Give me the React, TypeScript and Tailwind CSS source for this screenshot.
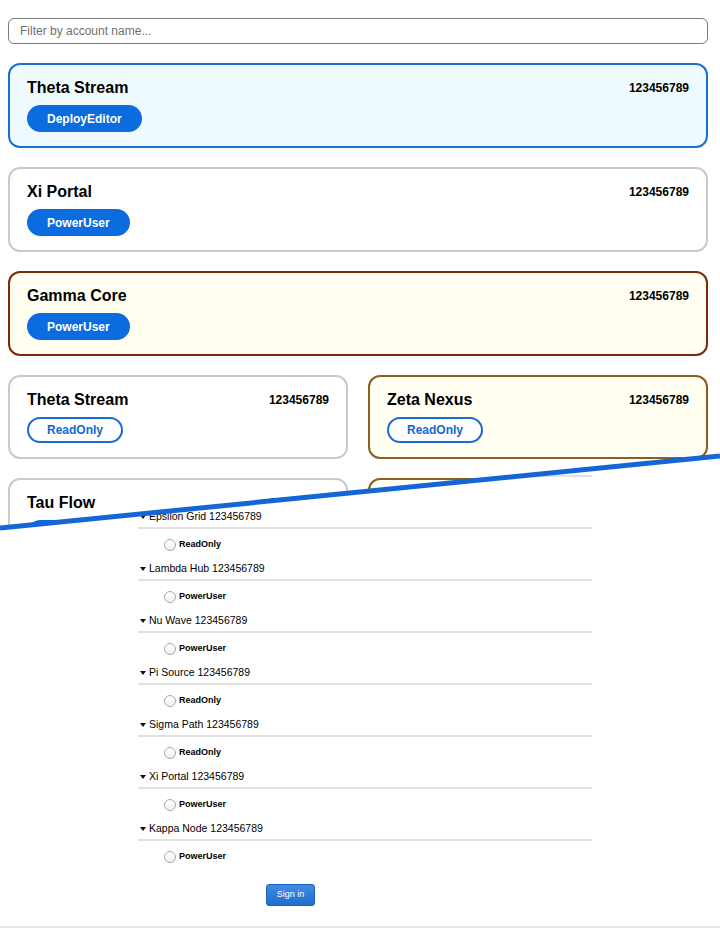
import React from "react";

type Tone = "blue" | "plain" | "amber" | "gold";
interface Account { name: string; id: string; role: string; tone: Tone; outline?: boolean; }

const FONT = { fontFamily: '"Liberation Sans", Arial, Helvetica, sans-serif' };

const TONES: Record<Tone, string> = {
  blue: "border-2 border-[#1a6fd6] bg-[#effaff]",
  plain: "border-2 border-[#cacaca] bg-white",
  amber: "border-2 border-[#7a2c08] bg-[#fffef0]",
  gold: "border-2 border-[#8c5f1c] bg-[#fffef0]",
};

const wide: Account[] = [
  { name: "Theta Stream", id: "123456789", role: "DeployEditor", tone: "blue" },
  { name: "Xi Portal", id: "123456789", role: "PowerUser", tone: "plain" },
  { name: "Gamma Core", id: "123456789", role: "PowerUser", tone: "amber" },
];

const pairs: Account[][] = [
  [
    { name: "Theta Stream", id: "123456789", role: "ReadOnly", tone: "plain", outline: true },
    { name: "Zeta Nexus", id: "123456789", role: "ReadOnly", tone: "gold", outline: true },
  ],
  [
    { name: "Tau Flow", id: "123456789", role: "PowerUser", tone: "plain" },
    { name: "Omega Point", id: "123456789", role: "ReadOnly", tone: "gold", outline: true },
  ],
];

// old sign-in list, shown under the diagonal cut
const legacy = [
  { name: "Omicron Base", role: "PowerUser" },
  { name: "Epsilon Grid", role: "ReadOnly" },
  { name: "Lambda Hub", role: "PowerUser" },
  { name: "Nu Wave", role: "PowerUser" },
  { name: "Pi Source", role: "ReadOnly" },
  { name: "Sigma Path", role: "ReadOnly" },
  { name: "Xi Portal", role: "PowerUser" },
  { name: "Kappa Node", role: "PowerUser" },
];

function Card({ a }: { a: Account }) {
  return (
    <div className={`rounded-[12px] px-[17px] pt-[12px] pb-[14px] ${TONES[a.tone]}`}>
      <div className="flex items-center justify-between h-[22px]">
        <span className="text-[16px] font-bold text-black">{a.name}</span>
        <span className="text-[12px] font-bold text-black">{a.id}</span>
      </div>
      <div className="mt-[6px] flex">
        {a.outline ? (
          <span className="h-[26px] px-[18px] rounded-full border-2 border-[#1a6ad8] bg-white text-[#1466d2] text-[12px] font-bold flex items-center">{a.role}</span>
        ) : (
          <span className="h-[27px] px-5 rounded-full bg-[#0b6ce0] text-white text-[12px] font-bold flex items-center">{a.role}</span>
        )}
      </div>
    </div>
  );
}

export default function App() {
  return (
    <div className="relative h-[929px] w-[720px] overflow-hidden bg-white" style={FONT}>
      {/* New layout */}
      <div className="pl-2 pr-3 pt-[18px]">
        <input
          placeholder="Filter by account name..."
          className="w-full h-[26px] rounded-[6px] border-[1.5px] border-[#7a7a7a] px-[11px] text-[12px] text-black placeholder:text-[#707070] outline-none"
        />
        <div className="mt-[19px] flex flex-col gap-[19px]">
          {wide.map((a, i) => <Card key={i} a={a} />)}
          {pairs.map((p, i) => (
            <div key={i} className="grid grid-cols-2 gap-5">
              {p.map((a, j) => <Card key={j} a={a} />)}
            </div>
          ))}
        </div>
      </div>

      {/* Old layout, clipped below the diagonal */}
      <div className="absolute inset-0 bg-white [clip-path:polygon(0_528px,720px_456px,720px_929px,0_929px)]">
        <div className="ml-[138px] w-[454px] pt-[455px]">
          {legacy.map(l => (
            <div key={l.name} className="mb-[6px]">
              <div className="h-[22px] flex items-center border-b-2 border-[#e2e2e2] pl-[2px] text-[10.5px] text-black">
                <svg width="6" height="4" viewBox="0 0 6 4" className="mr-[3px]"><polygon points="0,0 6,0 3,4" fill="#111" /></svg>
                {l.name} 123456789
              </div>
              <div className="mt-[8px] h-[16px] flex items-center pl-[26px]">
                <span className="w-[12px] h-[12px] rounded-full border border-[#a8a8a8] bg-gradient-to-b from-white to-[#f1f1f1]" />
                <span className="ml-[3px] text-[9px] font-bold text-black">{l.role}</span>
              </div>
            </div>
          ))}
          <div className="mt-[15px] pl-[128px]">
            <button className="w-[49px] h-[22px] rounded-[3px] border border-[#1b62bf] bg-gradient-to-b from-[#3f8de2] to-[#1f6cce] text-white text-[9px]">Sign in</button>
          </div>
        </div>
        <div className="absolute left-0 right-0 top-[926px] h-[2px] bg-[#e6e6e6]" />
      </div>

      <svg className="absolute inset-0 pointer-events-none" width="720" height="929" viewBox="0 0 720 929">
        <line x1="0" y1="528" x2="720" y2="456" stroke="#1466d8" strokeWidth="5" />
      </svg>
    </div>
  );
}
